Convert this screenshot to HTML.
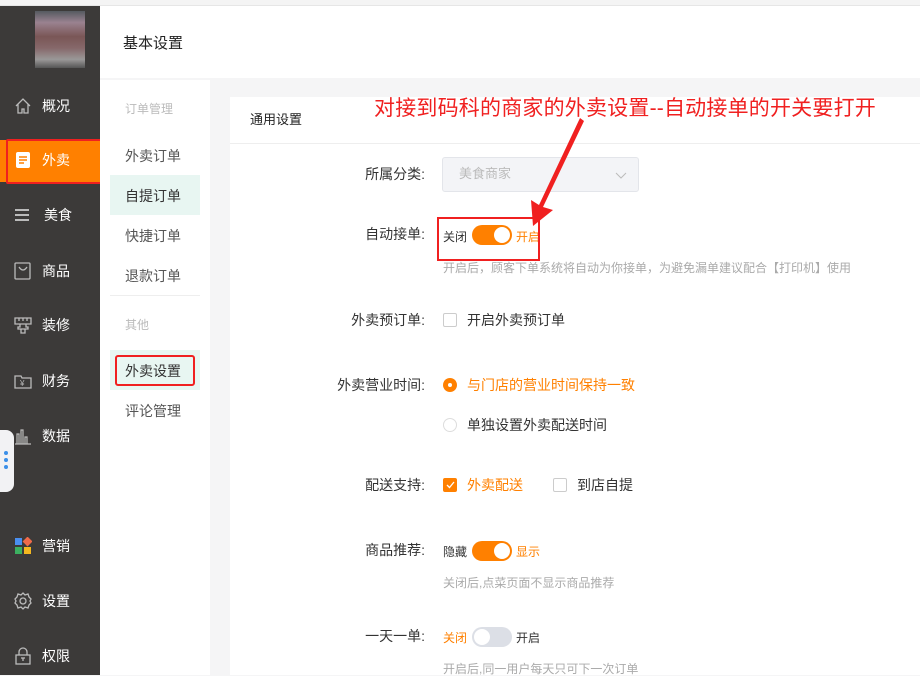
<!DOCTYPE html>
<html><head><meta charset="utf-8"><style>
*{margin:0;padding:0;box-sizing:border-box}
body{width:920px;height:675px;overflow:hidden;position:relative;background:#f5f5f6;font-family:"Liberation Sans","Noto Sans CJK SC",sans-serif;font-size:14px;color:#333}
.abs{position:absolute}
#top{left:0;top:0;width:920px;height:6px;background:#f4f4f4;border-bottom:1px solid #e6e6e6}
#side{left:0;top:6px;width:100px;height:669px;background:#3c3a39}
.nav{position:absolute;left:14px;color:#fff;font-size:14px;display:flex;align-items:center;gap:8px;line-height:18px}
.nav .ic{width:18px;height:18px}
#hdr{left:100px;top:6px;width:820px;height:72px;background:#fff}
#sub{left:100px;top:80px;width:110px;height:595px;background:#fff}
.sm{position:absolute;left:25px;font-size:14px;color:#555;line-height:16px}
.sg{position:absolute;left:25px;font-size:12px;color:#bbb;line-height:14px}
#card{left:230px;top:97px;width:690px;height:578px;background:#fff}
.lbl{position:absolute;right:495px;font-size:14px;color:#333;text-align:right;white-space:nowrap;line-height:16px}
.t{position:absolute;font-size:14px;white-space:nowrap;line-height:16px}
.hint{position:absolute;font-size:12px;color:#aaa;white-space:nowrap;line-height:14px}
.sw{position:absolute;width:40px;height:20px;border-radius:10px;background:#ff8000}
.sw::after{content:"";position:absolute;top:2px;left:22px;width:16px;height:16px;border-radius:50%;background:#fff}
.sw.off{background:#dcdfe6}.sw.off::after{left:2px}
.cb{position:absolute;width:14px;height:14px;border:1px solid #ccc;border-radius:2px;background:#fff}
.o{color:#ff8000}
</style></head><body>
<div class="abs" id="top"></div>
<div class="abs" id="side">
  <div class="abs" style="left:35px;top:5px;width:50px;height:57px;background:linear-gradient(180deg,#555a60 0%,#9a8290 20%,#7a5656 45%,#86686a 65%,#9a9898 85%,#555 100%)"></div>
  <div class="abs" style="left:0;top:134px;width:100px;height:42px;background:#ff8000"></div>
</div>
<div class="nav" style="top:97px"><svg class="ic" viewBox="0 0 18 18" fill="none" stroke="#bbb" stroke-width="1.3"><path d="M2 9L9 2l7 7M4 7v9h4v-4h2v4h4V7"/></svg><span style="margin-left:2px">概况</span></div>
<div class="nav" style="top:151px"><svg class="ic" viewBox="0 0 18 18"><rect x="2" y="1" width="14" height="16" rx="2" fill="#fff"/><path d="M5 6h8M5 9h8M5 12h5" stroke="#ff8000" stroke-width="1.5"/></svg><span style="margin-left:2px">外卖</span></div>
<div class="nav" style="top:206px"><svg class="ic" viewBox="0 0 18 18" stroke="#bbb" stroke-width="2"><path d="M1 4h14M1 9h14M1 14h14"/></svg><span style="margin-left:4px">美食</span></div>
<div class="nav" style="top:262px"><svg class="ic" viewBox="0 0 18 18" fill="none" stroke="#bbb" stroke-width="1.3"><rect x="1" y="1" width="15" height="16" rx="1"/><path d="M5 5q4 6 8 0"/></svg><span style="margin-left:2px">商品</span></div>
<div class="nav" style="top:316px"><svg class="ic" viewBox="0 0 18 18" fill="none" stroke="#bbb" stroke-width="1.3"><path d="M1 2h16v6H1zM6 8v3H4v2h10v-2h-2V8M7 13v4h4v-4M5 2v3M9 2v3M13 2v3"/></svg><span style="margin-left:2px">装修</span></div>
<div class="nav" style="top:372px"><svg class="ic" viewBox="0 0 18 18" fill="none" stroke="#bbb" stroke-width="1.3"><path d="M1 4h6l1 2h9v10H1z"/><text x="6" y="14" font-size="8" fill="#bbb" stroke="none">¥</text></svg><span style="margin-left:2px">财务</span></div>
<div class="nav" style="top:427px"><svg class="ic" viewBox="0 0 18 18" fill="none" stroke="#bbb" stroke-width="1.2"><path d="M1 17h16M3 17V7h2v10M7 17V3h2v14M11 17v-7h2v7"/></svg><span style="margin-left:2px">数据</span></div>
<div class="abs" style="left:-4px;top:430px;width:18px;height:62px;background:#f2f2f4;border-radius:0 8px 8px 0"></div>
<div class="abs" style="left:4px;top:451px;width:4px;height:4px;border-radius:50%;background:#3b8fe8;box-shadow:0 7px 0 #3b8fe8,0 14px 0 #3b8fe8"></div>
<div class="nav" style="top:537px"><svg class="ic" viewBox="0 0 18 18"><rect x="1" y="1" width="7" height="7" fill="#4a8ff0"/><rect x="10" y="1" width="7" height="7" fill="#f06a4a" transform="rotate(45 13.5 4.5)"/><rect x="1" y="10" width="7" height="7" fill="#3cb060"/><rect x="10" y="10" width="7" height="7" fill="#f5b820"/></svg><span style="margin-left:2px">营销</span></div>
<div class="nav" style="top:592px"><svg class="ic" viewBox="0 0 18 18" fill="none" stroke="#bbb" stroke-width="1.3"><circle cx="9" cy="9" r="3"/><path d="M9 1l2 2 3-1 1 3 2 2-1 2 1 2-2 2-1 3-3-1-2 2-2-2-3 1-1-3-2-2 1-2-1-2 2-2 1-3 3 1z"/></svg><span style="margin-left:2px">设置</span></div>
<div class="nav" style="top:647px"><svg class="ic" viewBox="0 0 18 18" fill="none" stroke="#bbb" stroke-width="1.3"><rect x="2" y="8" width="14" height="9"/><path d="M5 8V5a4 4 0 018 0v3M9 11v3M7 11h4"/></svg><span style="margin-left:2px">权限</span></div>
<div class="abs" style="left:6px;top:139px;width:109px;height:45px;border:2px solid #f02020;border-radius:2px"></div>

<div class="abs" id="hdr"><div class="abs" style="left:23px;top:29px;font-size:15px;line-height:18px;color:#222">基本设置</div></div>
<div class="abs" id="sub">
  <div class="sg" style="top:22px">订单管理</div>
  <div class="sm" style="top:68px">外卖订单</div>
  <div class="abs" style="left:10px;top:95px;width:90px;height:40px;background:#e8f6f2"></div>
  <div class="sm" style="top:108px;color:#333">自提订单</div>
  <div class="sm" style="top:148px">快捷订单</div>
  <div class="sm" style="top:188px">退款订单</div>
  <div class="abs" style="left:10px;top:215px;width:90px;height:1px;background:#eee"></div>
  <div class="sg" style="top:238px">其他</div>
  <div class="abs" style="left:10px;top:270px;width:90px;height:40px;background:#e8f6f2"></div>
  <div class="abs" style="left:15px;top:275px;width:80px;height:31px;border:2px solid #f02020;border-radius:3px"></div>
  <div class="sm" style="top:283px;color:#333">外卖设置</div>
  <div class="sm" style="top:323px">评论管理</div>
</div>
<div class="abs" id="card">
  <div class="abs" style="left:20px;top:15px;font-size:13px;line-height:16px;color:#222">通用设置</div>
  <div class="abs" style="left:0;top:46px;width:690px;height:1px;background:#eee"></div>
</div>
<div class="lbl" style="top:166px">所属分类:</div>
<div class="abs" style="left:442px;top:157px;width:197px;height:35px;background:#f3f4f7;border:1px solid #e3e5ea;border-radius:3px"><span class="abs" style="left:16px;top:8px;font-size:13px;line-height:16px;color:#bbb">美食商家</span><svg class="abs" style="left:172px;top:12px" width="12" height="10" viewBox="0 0 12 10" fill="none" stroke="#bbb"><path d="M1 3l5 5 5-5"/></svg></div>
<div class="lbl" style="top:226px">自动接单:</div>
<div class="t" style="left:443px;top:229px;font-size:12px">关闭</div>
<div class="sw" style="left:472px;top:225px"></div>
<div class="t o" style="left:516px;top:229px;font-size:12px">开启</div>
<div class="abs" style="left:437px;top:217px;width:103px;height:44px;border:2px solid #f02020"></div>
<div class="hint" style="left:443px;top:261px">开启后，顾客下单系统将自动为你接单，为避免漏单建议配合【打印机】使用</div>
<div class="lbl" style="top:312px">外卖预订单:</div>
<div class="cb" style="left:443px;top:313px"></div>
<div class="t" style="left:467px;top:312px">开启外卖预订单</div>
<div class="lbl" style="top:377px">外卖营业时间:</div>
<div class="abs" style="left:443px;top:378px;width:14px;height:14px;border-radius:50%;background:#ff8000"></div>
<div class="abs" style="left:448px;top:383px;width:4px;height:4px;border-radius:50%;background:#fff"></div>
<div class="t o" style="left:467px;top:377px">与门店的营业时间保持一致</div>
<div class="abs" style="left:443px;top:418px;width:14px;height:14px;border-radius:50%;border:1px solid #ddd"></div>
<div class="t" style="left:467px;top:417px">单独设置外卖配送时间</div>
<div class="lbl" style="top:477px">配送支持:</div>
<div class="cb" style="left:443px;top:478px;background:#ff8000;border-color:#ff8000"><svg class="abs" style="left:2px;top:2px" width="9" height="8" viewBox="0 0 9 8" fill="none" stroke="#fff" stroke-width="1.3"><path d="M1 4l2.5 2.5L8 1"/></svg></div>
<div class="t o" style="left:467px;top:477px">外卖配送</div>
<div class="cb" style="left:553px;top:478px"></div>
<div class="t" style="left:577px;top:477px">到店自提</div>
<div class="lbl" style="top:542px">商品推荐:</div>
<div class="t" style="left:443px;top:544px;font-size:12px">隐藏</div>
<div class="sw" style="left:472px;top:541px"></div>
<div class="t o" style="left:516px;top:544px;font-size:12px">显示</div>
<div class="hint" style="left:443px;top:576px">关闭后,点菜页面不显示商品推荐</div>
<div class="lbl" style="top:628px">一天一单:</div>
<div class="t o" style="left:443px;top:630px;font-size:12px">关闭</div>
<div class="sw off" style="left:472px;top:627px"></div>
<div class="t" style="left:516px;top:630px;font-size:12px">开启</div>
<div class="hint" style="left:443px;top:662px">开启后,同一用户每天只可下一次订单</div>

<div class="abs" style="left:374px;top:97px;font-size:21px;line-height:24px;color:#f02020;white-space:nowrap;letter-spacing:0.2px">对接到码科的商家的外卖设置--自动接单的开关要打开</div>
<svg class="abs" style="left:0;top:0" width="920" height="675"><polygon points="580,118 584,121 543,207 553,210 533,226 531,200 539,205" fill="#f02020"/></svg>
</body></html>
